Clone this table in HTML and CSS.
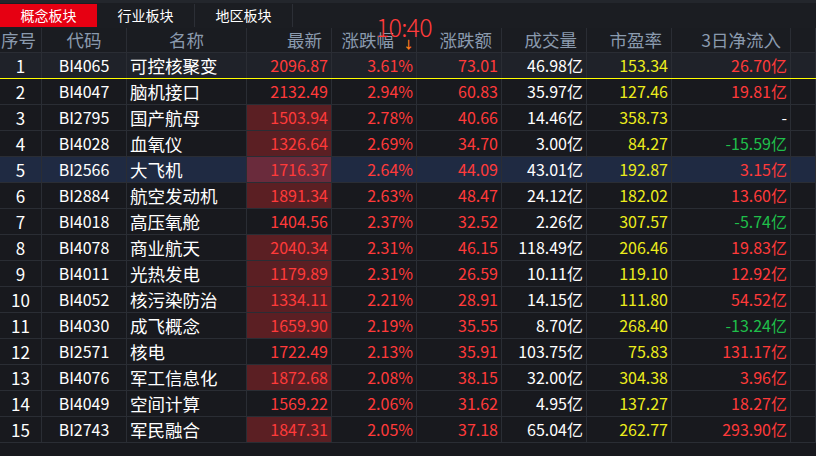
FILE: index.html
```html
<!DOCTYPE html>
<html lang="zh">
<head>
<meta charset="utf-8">
<title>概念板块</title>
<link rel="stylesheet" href="styles.css">
</head>
<body>
<div class="app">
  <div class="tabs">
    <div class="tab active">概念板块</div>
    <div class="tab">行业板块</div>
    <div class="tab">地区板块</div>
    <div class="tab-rest"></div>
  </div>
  <div class="clock">10:40</div>
  <div class="row head">
    <div class="c left">序号</div>
    <div class="c center">代码</div>
    <div class="c center">名称</div>
    <div class="c hr">最新</div>
    <div class="c hr sorted">涨跌幅<span class="arrow">↓</span></div>
    <div class="c hr">涨跌额</div>
    <div class="c hr">成交量</div>
    <div class="c hr">市盈率</div>
    <div class="c hr">3日净流入</div>
    <div class="c"></div>
  </div>
  <div class="body">
    <div class="row sel"><div class="c center w">1</div><div class="c center w">BI4065</div><div class="c name">可控核聚变</div><div class="c num r">2096.87</div><div class="c num r">3.61%</div><div class="c num r">73.01</div><div class="c num w">46.98亿</div><div class="c num y">153.34</div><div class="c num r">26.70亿</div><div class="c"></div></div>
    <div class="row"><div class="c center w">2</div><div class="c center w">BI4047</div><div class="c name">脑机接口</div><div class="c num r">2132.49</div><div class="c num r">2.94%</div><div class="c num r">60.83</div><div class="c num w">35.97亿</div><div class="c num y">127.46</div><div class="c num r">19.81亿</div><div class="c"></div></div>
    <div class="row"><div class="c center w">3</div><div class="c center w">BI2795</div><div class="c name">国产航母</div><div class="c num r hot">1503.94</div><div class="c num r">2.78%</div><div class="c num r">40.66</div><div class="c num w">14.46亿</div><div class="c num y">358.73</div><div class="c num w">-</div><div class="c"></div></div>
    <div class="row"><div class="c center w">4</div><div class="c center w">BI4028</div><div class="c name">血氧仪</div><div class="c num r hot">1326.64</div><div class="c num r">2.69%</div><div class="c num r">34.70</div><div class="c num w">3.00亿</div><div class="c num y">84.27</div><div class="c num g">-15.59亿</div><div class="c"></div></div>
    <div class="row cur"><div class="c center w">5</div><div class="c center w">BI2566</div><div class="c name">大飞机</div><div class="c num r hot">1716.37</div><div class="c num r">2.64%</div><div class="c num r">44.09</div><div class="c num w">43.01亿</div><div class="c num y">192.87</div><div class="c num r">3.15亿</div><div class="c"></div></div>
    <div class="row"><div class="c center w">6</div><div class="c center w">BI2884</div><div class="c name">航空发动机</div><div class="c num r hot">1891.34</div><div class="c num r">2.63%</div><div class="c num r">48.47</div><div class="c num w">24.12亿</div><div class="c num y">182.02</div><div class="c num r">13.60亿</div><div class="c"></div></div>
    <div class="row"><div class="c center w">7</div><div class="c center w">BI4018</div><div class="c name">高压氧舱</div><div class="c num r">1404.56</div><div class="c num r">2.37%</div><div class="c num r">32.52</div><div class="c num w">2.26亿</div><div class="c num y">307.57</div><div class="c num g">-5.74亿</div><div class="c"></div></div>
    <div class="row"><div class="c center w">8</div><div class="c center w">BI4078</div><div class="c name">商业航天</div><div class="c num r hot">2040.34</div><div class="c num r">2.31%</div><div class="c num r">46.15</div><div class="c num w">118.49亿</div><div class="c num y">206.46</div><div class="c num r">19.83亿</div><div class="c"></div></div>
    <div class="row"><div class="c center w">9</div><div class="c center w">BI4011</div><div class="c name">光热发电</div><div class="c num r hot">1179.89</div><div class="c num r">2.31%</div><div class="c num r">26.59</div><div class="c num w">10.11亿</div><div class="c num y">119.10</div><div class="c num r">12.92亿</div><div class="c"></div></div>
    <div class="row"><div class="c center w">10</div><div class="c center w">BI4052</div><div class="c name">核污染防治</div><div class="c num r hot">1334.11</div><div class="c num r">2.21%</div><div class="c num r">28.91</div><div class="c num w">14.15亿</div><div class="c num y">111.80</div><div class="c num r">54.52亿</div><div class="c"></div></div>
    <div class="row"><div class="c center w">11</div><div class="c center w">BI4030</div><div class="c name">成飞概念</div><div class="c num r hot">1659.90</div><div class="c num r">2.19%</div><div class="c num r">35.55</div><div class="c num w">8.70亿</div><div class="c num y">268.40</div><div class="c num g">-13.24亿</div><div class="c"></div></div>
    <div class="row"><div class="c center w">12</div><div class="c center w">BI2571</div><div class="c name">核电</div><div class="c num r">1722.49</div><div class="c num r">2.13%</div><div class="c num r">35.91</div><div class="c num w">103.75亿</div><div class="c num y">75.83</div><div class="c num r">131.17亿</div><div class="c"></div></div>
    <div class="row"><div class="c center w">13</div><div class="c center w">BI4076</div><div class="c name">军工信息化</div><div class="c num r hot">1872.68</div><div class="c num r">2.08%</div><div class="c num r">38.15</div><div class="c num w">32.00亿</div><div class="c num y">304.38</div><div class="c num r">3.96亿</div><div class="c"></div></div>
    <div class="row"><div class="c center w">14</div><div class="c center w">BI4049</div><div class="c name">空间计算</div><div class="c num r">1569.22</div><div class="c num r">2.06%</div><div class="c num r">31.62</div><div class="c num w">4.95亿</div><div class="c num y">137.27</div><div class="c num r">18.27亿</div><div class="c"></div></div>
    <div class="row"><div class="c center w">15</div><div class="c center w">BI2743</div><div class="c name">军民融合</div><div class="c num r hot">1847.31</div><div class="c num r">2.05%</div><div class="c num r">37.18</div><div class="c num w">65.04亿</div><div class="c num y">262.77</div><div class="c num r">293.90亿</div><div class="c"></div></div>
  </div>
</div>
</body>
</html>
```

FILE: styles.css
```css
* { box-sizing: border-box; }
html, body {
  margin: 0;
  padding: 0;
  background: #18191e;
  width: 816px;
  height: 456px;
  overflow: hidden;
}
.app {
  position: relative;
  width: 816px;
  height: 456px;
  background: #18191e;
  font-family: "Noto Sans CJK SC", "Noto Sans", sans-serif;
}
.tabs {
  display: flex;
  height: 28px;
  background: #1b1d22;
  border-top: 3px solid #23262c;
  padding-top: 1px;
}
.tab {
  width: 98px;
  height: 23px;
  line-height: 23px;
  text-align: center;
  color: #ffffff;
  font-size: 14px;
  border-right: 1px solid #2c2f36;
}
.tab.active {
  background: #e60012;
  width: 97px;
  border-right: none;
}
.tab-rest { flex: 1; }
.clock {
  position: absolute;
  left: 376px;
  top: 10px;
  font-size: 25px;
  line-height: 32px;
  color: #ff3b3b;
  letter-spacing: -0.8px;
  font-weight: 300;
}
.row {
  display: grid;
  grid-template-columns: 42px 85px 120px 85px 85px 85px 85px 85px 119px 1fr;
  height: 26px;
  border-bottom: 1px solid #2a2d34;
}
.row.head {
  height: 25px;
  background: #1a1c21;
}
.c {
  border-right: 1px solid #2a2d34;
  line-height: 25px;
  font-size: 16px;
  white-space: nowrap;
  overflow: hidden;
}
.head .c {
  color: #8a9aae;
  font-size: 17.5px;
  line-height: 24px;
}
.left { text-align: left; padding-left: 1px; }
.center { text-align: center; }
.hr { text-align: right; padding-right: 9px; }
.sorted { padding-right: 2px; }
.arrow {
  display: inline-block;
  color: #ff7a1a;
  font-size: 11px;
  margin-left: 9px;
  vertical-align: -2px;
  font-weight: 700;
}
.w { color: #ffffff; }
.name {
  color: #ffffff;
  font-size: 17.5px;
  padding-left: 3px;
}
.num { text-align: right; padding-right: 3px; }
.r { color: #ff3a3a; }
.y { color: #ecec1c; }
.g { color: #1fbf4a; }
.hot { background: #5b1f23; }
.row.sel {
  background: #1f2229;
  border-bottom: 1px solid #ffff00;
}
.row.cur { background: #1f2a42; }
.row.cur .hot { background: #6a2b3c; }
.body .row .c:first-child { font-size: 17px; }
```
